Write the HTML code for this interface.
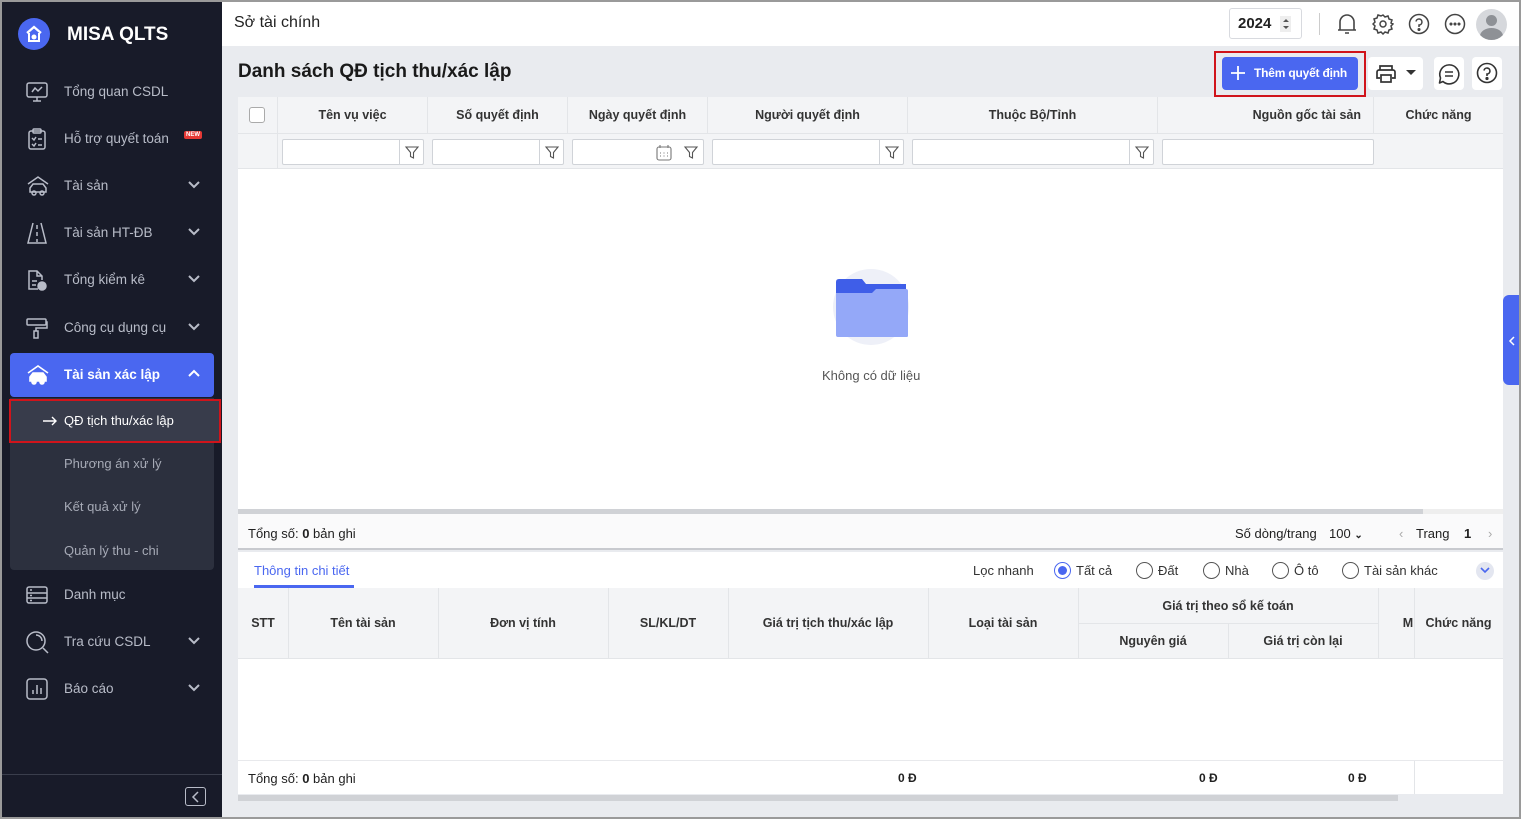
<!DOCTYPE html>
<html><head><meta charset="utf-8"><style>
*{box-sizing:border-box;margin:0;padding:0}
body{width:1521px;height:819px;overflow:hidden;font-family:"Liberation Sans",sans-serif;font-size:13px;color:#212121;background:#9a9a9a;position:relative}
.a{position:absolute}
#frame{left:2px;top:2px;width:1517px;height:815px;background:#e9ebef;overflow:hidden}
#side{left:0;top:0;width:220px;height:815px;background:#181b29}
.mi{position:absolute;left:8px;width:204px;height:44px;color:#b8bcc8;font-size:13.5px}
.mi .t{position:absolute;left:54px;top:14px}
.mi svg.ic{position:absolute;left:16px;top:11px}
.mi .ch{position:absolute;left:178px;top:16px}
.sub{position:absolute;left:62px;color:#a6aab6;font-size:13px}
.th{position:absolute;top:0;height:36px;line-height:36px;font-weight:bold;font-size:12.5px;text-align:center;color:#333;border-right:1px solid #e3e5e8}
.fi{position:absolute;top:5px;height:26px;border:1px solid #d0d3d8;background:#fff;border-radius:2px}
.fb{position:absolute;right:0;top:0;width:24px;height:24px;border-left:1px solid #d0d3d8}
.dh{position:absolute;font-weight:bold;font-size:12.5px;color:#333;text-align:center}
.vl{position:absolute;width:1px;background:#e3e5e8}
.rad{position:absolute;top:10px;width:17px;height:17px;border:1px solid #555;border-radius:50%}
.rl{position:absolute;top:11px;font-size:13px;color:#333}
</style></head><body>
<div id="frame" class="a">
<div id="side" class="a">
 <div class="a" style="left:16px;top:16px;width:32px;height:32px;border-radius:50%;background:#4a67f0"></div>
 <svg class="a" style="left:16px;top:16px" width="32" height="32"><path d="M9 15 L16 9 L23 15" stroke="#fff" stroke-width="2.2" fill="none"/><path d="M11 15 V23 H21 V15" stroke="#fff" stroke-width="2" fill="none"/><circle cx="16" cy="19" r="2.5" fill="#fff"/></svg>
 <div class="a" style="left:65px;top:22px;color:#fff;font-weight:bold;font-size:19px">MISA QLTS</div>

 <div class="mi" style="top:68px"><svg class="ic" width="22" height="22" fill="none" stroke="#b8bcc8" stroke-width="1.5"><rect x="1" y="2" width="20" height="14" rx="2"/><path d="M6 11 L9 7 L12 10 L16 6 M11 16 V20 M7 20 H15"/></svg><span class="t">Tổng quan CSDL</span></div>
 <div class="mi" style="top:115px"><svg class="ic" width="22" height="22" fill="none" stroke="#b8bcc8" stroke-width="1.5"><rect x="3" y="3" width="16" height="18" rx="2"/><rect x="7" y="1" width="8" height="4" rx="1"/><path d="M6 10 L8 12 L10 9 M12 11 H16 M6 16 L8 18 L10 15 M12 17 H16"/></svg><span class="t">Hỗ trợ quyết toán</span><span class="a" style="left:174px;top:14px;background:#e53935;color:#fff;font-size:6px;font-weight:bold;padding:1px 2px;border-radius:2px">NEW</span></div>
 <div class="mi" style="top:162px"><svg class="ic" width="24" height="22" fill="none" stroke="#b8bcc8" stroke-width="1.5"><path d="M2 9 L12 2 L22 9"/><path d="M4 17 V13 L7 9 H17 L20 13 V17 Z"/><circle cx="8" cy="18" r="2"/><circle cx="16" cy="18" r="2"/></svg><span class="t">Tài sản</span><svg class="ch" width="12" height="10"><path d="M1 2 L6 7 L11 2" stroke="#b8bcc8" stroke-width="2" fill="none"/></svg></div>
 <div class="mi" style="top:209px"><svg class="ic" width="22" height="22" fill="none" stroke="#b8bcc8" stroke-width="1.5"><path d="M7 1 L2 21 H20 L15 1 M11 3 V7 M11 10 V14 M11 17 V20"/></svg><span class="t">Tài sản HT-ĐB</span><svg class="ch" width="12" height="10"><path d="M1 2 L6 7 L11 2" stroke="#b8bcc8" stroke-width="2" fill="none"/></svg></div>
 <div class="mi" style="top:256px"><svg class="ic" width="22" height="22" fill="none" stroke="#b8bcc8" stroke-width="1.5"><path d="M12 20 H3 V2 H11 L16 7 V11 M11 2 V7 H16 M6 12 H11 M6 16 H10"/><circle cx="16" cy="17" r="4" fill="#b8bcc8"/></svg><span class="t">Tổng kiểm kê</span><svg class="ch" width="12" height="10"><path d="M1 2 L6 7 L11 2" stroke="#b8bcc8" stroke-width="2" fill="none"/></svg></div>
 <div class="mi" style="top:304px"><svg class="ic" width="22" height="22" fill="none" stroke="#b8bcc8" stroke-width="1.5"><rect x="1" y="2" width="19" height="6" rx="1"/><path d="M20 5 H21 V11 H10 V14 M8 14 H12 V21 H8 Z"/></svg><span class="t">Công cụ dụng cụ</span><svg class="ch" width="12" height="10"><path d="M1 2 L6 7 L11 2" stroke="#b8bcc8" stroke-width="2" fill="none"/></svg></div>
 <div class="mi" style="top:351px;background:#4a67f0;border-radius:4px;color:#fff;font-weight:bold"><svg class="ic" width="24" height="22" fill="none" stroke="#fff" stroke-width="1.6"><path d="M2 9 L12 2 L22 9"/><path d="M4 17 V13 L7 9 H17 L20 13 V17 Z" fill="#fff"/><circle cx="8" cy="18" r="2" fill="#fff"/><circle cx="16" cy="18" r="2" fill="#fff"/></svg><span class="t">Tài sản xác lập</span><svg class="ch" width="12" height="10"><path d="M1 7 L6 2 L11 7" stroke="#fff" stroke-width="2" fill="none"/></svg></div>
 <div class="a" style="left:8px;top:396px;width:204px;height:172px;background:#2c303e;border-radius:0 0 4px 4px"></div>
 <div class="a" style="left:7px;top:397px;width:212px;height:44px;border:2px solid #d0141b;background:#383c4b"></div>
 <svg class="a" style="left:40px;top:414px" width="16" height="10"><path d="M1 5 H14 M10 1 L14 5 L10 9" stroke="#fff" stroke-width="1.4" fill="none"/></svg>
 <div class="sub" style="top:411px;color:#fff">QĐ tịch thu/xác lập</div>
 <div class="sub" style="top:454px">Phương án xử lý</div>
 <div class="sub" style="top:497px">Kết quả xử lý</div>
 <div class="sub" style="top:541px">Quản lý thu - chi</div>
 <div class="mi" style="top:571px"><svg class="ic" width="22" height="22" fill="none" stroke="#b8bcc8" stroke-width="1.5"><rect x="1" y="3" width="20" height="16" rx="2"/><path d="M1 9 H21 M1 14 H21 M4 6 H6 M4 11.5 H6 M4 16.5 H6"/></svg><span class="t">Danh mục</span></div>
 <div class="mi" style="top:618px"><svg class="ic" width="24" height="24" fill="none" stroke="#b8bcc8" stroke-width="1.5"><circle cx="10" cy="10" r="9"/><path d="M17 17 L22 22 M10 4 A6 6 0 0 1 16 10"/></svg><span class="t">Tra cứu CSDL</span><svg class="ch" width="12" height="10"><path d="M1 2 L6 7 L11 2" stroke="#b8bcc8" stroke-width="2" fill="none"/></svg></div>
 <div class="mi" style="top:665px"><svg class="ic" width="22" height="22" fill="none" stroke="#b8bcc8" stroke-width="1.5"><rect x="1" y="1" width="20" height="20" rx="3"/><path d="M7 16 V12 M11 16 V7 M15 16 V10"/></svg><span class="t">Báo cáo</span><svg class="ch" width="12" height="10"><path d="M1 2 L6 7 L11 2" stroke="#b8bcc8" stroke-width="2" fill="none"/></svg></div>
 <div class="a" style="left:0;top:772px;width:220px;height:1px;background:#3a3e4c"></div>
 <div class="a" style="left:183px;top:785px;width:21px;height:19px;border:1px solid #b8bcc8;border-radius:3px"></div>
 <svg class="a" style="left:189px;top:789px" width="10" height="12"><path d="M7 1 L2 6 L7 11" stroke="#b8bcc8" stroke-width="1.5" fill="none"/></svg>
</div>

<!-- top bar -->
<div class="a" style="left:220px;top:0;width:1297px;height:44px;background:#fff"></div>
<div class="a" style="left:232px;top:12px;font-size:16px;color:#222">Sở tài chính</div>
<div class="a" style="left:1227px;top:6px;width:73px;height:31px;border:1px solid #d8dadf;border-radius:3px;background:#fff"></div>
<div class="a" style="left:1236px;top:13px;font-size:15px;font-weight:bold;color:#222">2024</div>
<div class="a" style="left:1278px;top:14px;width:11px;height:16px;background:#eee"></div>
<svg class="a" style="left:1279px;top:15px" width="10" height="14"><path d="M2 5 L5 2 L8 5 Z M2 9 L5 12 L8 9 Z" fill="#555"/></svg>
<div class="a" style="left:1317px;top:11px;width:1px;height:22px;background:#ccc"></div>
<svg class="a" style="left:1334px;top:10px" width="22" height="24" fill="none" stroke="#444" stroke-width="1.6"><path d="M4 18 V10 A7 7 0 0 1 18 10 V18 Z M2 18 H20 M9 21 H13"/></svg>
<svg class="a" style="left:1370px;top:11px" width="22" height="22" fill="none" stroke="#444" stroke-width="1.5"><circle cx="11" cy="11" r="3"/><path d="M11 2 L13 4 L16 3 L17 6 L20 7 L19 10 L21 11 L19 13 L20 16 L17 17 L16 20 L13 19 L11 21 L9 19 L6 20 L5 17 L2 16 L3 13 L1 11 L3 9 L2 6 L5 5 L6 2 L9 3 Z"/></svg>
<svg class="a" style="left:1406px;top:11px" width="22" height="22" fill="none" stroke="#444" stroke-width="1.5"><circle cx="11" cy="11" r="9.5"/><path d="M8 8.5 A3 3 0 1 1 11 12 V14"/><circle cx="11" cy="16.5" r=".8" fill="#444"/></svg>
<svg class="a" style="left:1442px;top:11px" width="22" height="22" fill="none" stroke="#444" stroke-width="1.5"><circle cx="11" cy="11" r="9.5"/><circle cx="7" cy="11" r=".8" fill="#444"/><circle cx="11" cy="11" r=".8" fill="#444"/><circle cx="15" cy="11" r=".8" fill="#444"/></svg>
<div class="a" style="left:1474px;top:7px;width:31px;height:31px;border-radius:50%;background:#d6d8dc;overflow:hidden"><div class="a" style="left:10px;top:6px;width:11px;height:11px;border-radius:50%;background:#8e9196"></div><div class="a" style="left:4px;top:19px;width:23px;height:16px;border-radius:50%;background:#8e9196"></div></div>

<!-- page title/toolbar -->
<div class="a" style="left:236px;top:59px;font-size:19px;font-weight:bold;color:#1a1a1a">Danh sách QĐ tịch thu/xác lập</div>
<div class="a" style="left:1212px;top:49px;width:152px;height:46px;border:2px solid #d0141b"></div>
<div class="a" style="left:1220px;top:55px;width:136px;height:33px;background:#4a67f0;border-radius:4px;color:#fff;font-weight:bold;font-size:12px;line-height:33px;padding-left:32px;white-space:nowrap;letter-spacing:-0.2px">Thêm quyết định</div>
<svg class="a" style="left:1228px;top:63px" width="16" height="16"><path d="M8 1 V15 M1 8 H15" stroke="#fff" stroke-width="1.8"/></svg>
<div class="a" style="left:1366px;top:55px;width:55px;height:33px;background:#fff;border-radius:4px"></div>
<svg class="a" style="left:1373px;top:62px" width="22" height="20" fill="none" stroke="#333" stroke-width="1.7"><path d="M5 6 V2 H17 V6 M5 14 H2 V8 A2 2 0 0 1 4 6 H18 A2 2 0 0 1 20 8 V14 H17"/><rect x="6" y="11" width="10" height="7"/></svg>
<svg class="a" style="left:1404px;top:68px" width="10" height="6"><path d="M0 0 H10 L5 5Z" fill="#333"/></svg>
<div class="a" style="left:1432px;top:55px;width:30px;height:33px;background:#fff;border-radius:4px"></div>
<svg class="a" style="left:1435px;top:60px" width="24" height="24" fill="none" stroke="#333" stroke-width="1.6"><path d="M6 19.5 A9.5 9.5 0 1 0 3.5 16 L2.5 21 Z" stroke-linejoin="round"/><path d="M8 10 H16 M8 14 H16"/></svg>
<div class="a" style="left:1470px;top:55px;width:30px;height:33px;background:#fff;border-radius:4px"></div>
<svg class="a" style="left:1474px;top:60px" width="22" height="22" fill="none" stroke="#333" stroke-width="1.6"><circle cx="11" cy="11" r="9.5"/><path d="M8 8.5 A3 3 0 1 1 11 12 V14"/><circle cx="11" cy="16.5" r=".8" fill="#333"/></svg>

<!-- main grid -->
<div class="a" style="left:236px;top:95px;width:1265px;height:417px;background:#fff">
 <div class="a" style="left:0;top:0;width:1265px;height:72px;background:#f3f4f6;border-bottom:1px solid #e3e5e8"></div>
 <div class="a" style="left:0;top:36px;width:1265px;height:1px;background:#e3e5e8"></div>
 <div class="th" style="left:0;width:40px;height:72px"></div>
 <div class="a" style="left:11px;top:10px;width:16px;height:16px;border:1px solid #aaa;border-radius:3px;background:#fff"></div>
 <div class="th" style="left:40px;width:150px">Tên vụ việc</div>
 <div class="th" style="left:190px;width:140px">Số quyết định</div>
 <div class="th" style="left:330px;width:140px">Ngày quyết định</div>
 <div class="th" style="left:470px;width:200px">Người quyết định</div>
 <div class="th" style="left:670px;width:250px">Thuộc Bộ/Tỉnh</div>
 <div class="th" style="left:920px;width:216px;text-align:right;padding-right:12px">Nguồn gốc tài sản</div>
 <div class="th" style="left:1136px;width:129px;border:none">Chức năng</div>
 <div class="a" style="left:0;top:37px;width:1265px;height:35px">
  <div class="fi" style="left:44px;width:142px"><div class="fb"><svg width="24" height="24"><path d="M6 7 H18 L13.5 12.5 V18 L10.5 16.5 V12.5 Z" stroke="#555" fill="none" stroke-width="1.1"/></svg></div></div>
  <div class="fi" style="left:194px;width:132px"><div class="fb"><svg width="24" height="24"><path d="M6 7 H18 L13.5 12.5 V18 L10.5 16.5 V12.5 Z" stroke="#555" fill="none" stroke-width="1.1"/></svg></div></div>
  <div class="fi" style="left:334px;width:132px"><svg class="a" style="left:82px;top:4px" width="18" height="18" fill="none" stroke="#777" stroke-width="1.1"><rect x="2" y="3" width="14" height="13" rx="2"/><path d="M5 1 V4 M13 1 V4 M5 9 H6 M8.5 9 H9.5 M12 9 H13 M5 12 H6 M8.5 12 H9.5 M12 12 H13"/></svg><div class="fb" style="border:none"><svg width="24" height="24"><path d="M6 7 H18 L13.5 12.5 V18 L10.5 16.5 V12.5 Z" stroke="#555" fill="none" stroke-width="1.1"/></svg></div></div>
  <div class="fi" style="left:474px;width:192px"><div class="fb"><svg width="24" height="24"><path d="M6 7 H18 L13.5 12.5 V18 L10.5 16.5 V12.5 Z" stroke="#555" fill="none" stroke-width="1.1"/></svg></div></div>
  <div class="fi" style="left:674px;width:242px"><div class="fb"><svg width="24" height="24"><path d="M6 7 H18 L13.5 12.5 V18 L10.5 16.5 V12.5 Z" stroke="#555" fill="none" stroke-width="1.1"/></svg></div></div>
  <div class="fi" style="left:924px;width:212px"></div>
 </div>
 <div class="a" style="left:595px;top:172px;width:76px;height:76px;border-radius:50%;background:#eef0f8"></div>
 <svg class="a" style="left:598px;top:182px" width="72" height="60"><path d="M0 3 Q0 0 3 0 H26 L30 5 H70 V20 H0Z" fill="#3f5ee8"/><path d="M0 14 H36 L40 10 H70 Q72 10 72 12 V57 Q72 58 70 58 H2 Q0 58 0 56Z" fill="#94a8f8"/></svg>
 <div class="a" style="left:584px;top:271px;font-size:13px;color:#555">Không có dữ liệu</div>
 <div class="a" style="left:0;top:412px;width:1185px;height:6px;background:#d0d2d6"></div>
 <div class="a" style="left:1185px;top:412px;width:80px;height:6px;background:#eee"></div>
</div>

<!-- footer paging -->
<div class="a" style="left:236px;top:512px;width:1265px;height:36px;background:#fafafb;border-bottom:2px solid #c8cacf"></div>
<div class="a" style="left:246px;top:524px">Tổng số: <b>0</b> bản ghi</div>
<div class="a" style="left:1233px;top:524px">Số dòng/trang</div>
<div class="a" style="left:1327px;top:524px">100 <b style="font-size:10px">&#8964;</b></div>
<div class="a" style="left:1397px;top:524px;color:#aaa">&lsaquo;</div>
<div class="a" style="left:1414px;top:524px">Trang</div>
<div class="a" style="left:1462px;top:524px;font-weight:bold">1</div>
<div class="a" style="left:1486px;top:524px;color:#aaa">&rsaquo;</div>

<!-- detail -->
<div class="a" style="left:236px;top:550px;width:1265px;height:242px;background:#fff">
 <div class="a" style="left:16px;top:11px;color:#4a67f0;font-size:13px">Thông tin chi tiết</div>
 <div class="a" style="left:16px;top:33px;width:100px;height:3px;background:#4a67f0"></div>
 <div class="rl" style="left:735px">Lọc nhanh</div>
 <div class="rad" style="left:816px;border-color:#4a67f0"><div class="a" style="left:3px;top:3px;width:9px;height:9px;border-radius:50%;background:#4a67f0"></div></div><div class="rl" style="left:838px">Tất cả</div>
 <div class="rad" style="left:898px"></div><div class="rl" style="left:920px">Đất</div>
 <div class="rad" style="left:965px"></div><div class="rl" style="left:987px">Nhà</div>
 <div class="rad" style="left:1034px"></div><div class="rl" style="left:1056px">Ô tô</div>
 <div class="rad" style="left:1104px"></div><div class="rl" style="left:1126px">Tài sản khác</div>
 <div class="a" style="left:1238px;top:10px;width:18px;height:18px;border-radius:50%;background:#e3e6f0"></div>
 <svg class="a" style="left:1242px;top:15px" width="10" height="8"><path d="M1 1 L5 5 L9 1" stroke="#4a67f0" stroke-width="1.6" fill="none"/></svg>
 <div class="a" style="left:0;top:36px;width:1265px;height:71px;background:#f3f4f6;border-bottom:1px solid #e3e5e8"></div>
 <div class="a" style="left:840px;top:71px;width:300px;height:1px;background:#e3e5e8"></div>
 <div class="vl" style="left:50px;top:36px;height:71px"></div>
 <div class="vl" style="left:200px;top:36px;height:71px"></div>
 <div class="vl" style="left:370px;top:36px;height:71px"></div>
 <div class="vl" style="left:490px;top:36px;height:71px"></div>
 <div class="vl" style="left:690px;top:36px;height:71px"></div>
 <div class="vl" style="left:840px;top:36px;height:71px"></div>
 <div class="vl" style="left:990px;top:71px;height:36px"></div>
 <div class="vl" style="left:1140px;top:36px;height:71px"></div>
 <div class="vl" style="left:1176px;top:36px;height:71px"></div>
 <div class="dh" style="left:0;width:50px;top:64px">STT</div>
 <div class="dh" style="left:50px;width:150px;top:64px">Tên tài sản</div>
 <div class="dh" style="left:200px;width:170px;top:64px">Đơn vị tính</div>
 <div class="dh" style="left:370px;width:120px;top:64px">SL/KL/DT</div>
 <div class="dh" style="left:490px;width:200px;top:64px">Giá trị tịch thu/xác lập</div>
 <div class="dh" style="left:690px;width:150px;top:64px">Loại tài sản</div>
 <div class="dh" style="left:840px;width:300px;top:47px">Giá trị theo sổ kế toán</div>
 <div class="dh" style="left:840px;width:150px;top:82px">Nguyên giá</div>
 <div class="dh" style="left:990px;width:150px;top:82px">Giá trị còn lại</div>
 <div class="dh" style="left:1164px;width:12px;top:64px;overflow:hidden">M</div>
 <div class="dh" style="left:1176px;width:89px;top:64px">Chức năng</div>
 <div class="a" style="left:0;top:208px;width:1265px;height:1px;background:#e8e9ec"></div>
 <div class="a" style="left:10px;top:219px">Tổng số: <b>0</b> bản ghi</div>
 <div class="a" style="left:660px;top:219px;font-weight:bold;font-size:12px">0 Đ</div>
 <div class="a" style="left:961px;top:219px;font-weight:bold;font-size:12px">0 Đ</div>
 <div class="a" style="left:1110px;top:219px;font-weight:bold;font-size:12px">0 Đ</div>
 <div class="vl" style="left:1176px;top:209px;height:33px"></div>
 <div class="a" style="left:0;top:243px;width:1160px;height:6px;background:#d0d2d6"></div>
</div>
<div class="a" style="left:1501px;top:293px;width:16px;height:90px;background:#4a67f0;border-radius:6px 0 0 6px"></div>
<svg class="a" style="left:1506px;top:334px" width="8" height="10"><path d="M6 1 L2 5 L6 9" stroke="#fff" stroke-width="1.5" fill="none"/></svg>
</div>
</body></html>
